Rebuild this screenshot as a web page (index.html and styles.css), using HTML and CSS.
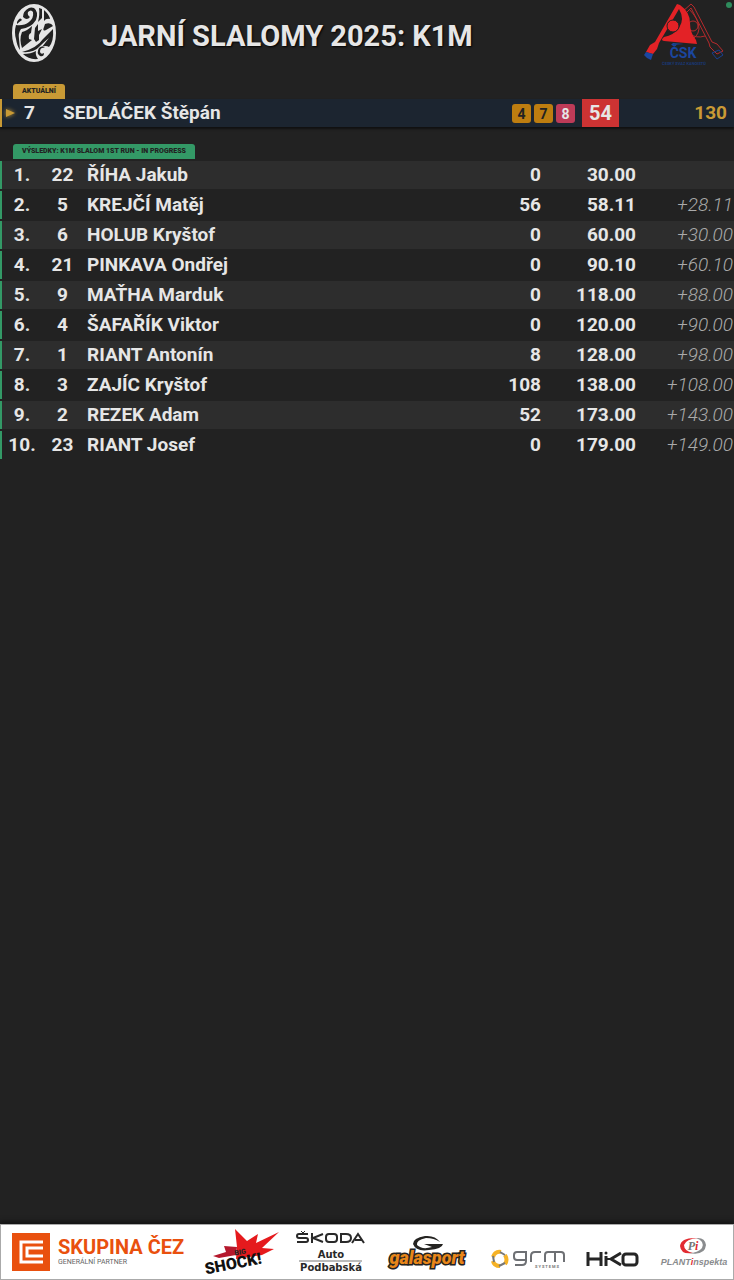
FILE: index.html
```html
<!DOCTYPE html>
<html lang="cs">
<head>
<meta charset="utf-8">
<meta name="viewport" content="width=device-width, initial-scale=1">
<title>Jarní slalomy 2025: K1M</title>
<link rel="stylesheet" href="styles.css">
</head>
<body>
<header class="header">
  <svg class="crest" viewBox="0 0 44 58" aria-label="Logo závodu" role="img">
    <ellipse cx="22" cy="29" rx="21" ry="28" fill="#e6e6e6"/>
    <g fill="#222">
      <path d="M17 4Q11 7 11 13Q15 17 18 13Q15 11 16 8Q19 5 21 8Q22 14 17 18Q12 22 4 21Q2 28 4 35Q5 42 8 46L7 35Q6 29 9 25Q19 24 24 16Q27 8 22 4Q19 3 17 4Z"/>
      <path d="M5 18Q8 12 10 16Q7 18 5 20Z"/>
      <path d="M27 4L30 5V14L26 18Q28 10 27 4Z"/>
      <path d="M32 6Q37 10 38 15Q34 14 32 17Z"/>
      <path d="M10 28Q15 27 20 22L19 29Q16 30 17 35L20 36L10 44Q7 35 10 28Z"/>
      <path d="M23 24L26 20L26 27L30 25L27 31V36L24 38L22 35Z"/>
      <path d="M33 20Q39 18 41 22L34 26Q30 28 32 23Z"/>
      <path d="M41 25Q42 37 37 43Q34 41 30 43Q33 39 37 34Q33 37 27 43Q22 49 10 48Q25 44 31 35Z"/>
      <path d="M11 50Q19 50 24 47Q23 51 26 55Q17 56 11 50Z"/>
      <path d="M33 44Q28 43 28 48Q29 51 32 49Q32 53 28 52Q24 49 27 44Q30 41 33 44Z"/>
    </g>
    <ellipse cx="22" cy="29" rx="21" ry="28" fill="none" stroke="#e6e6e6" stroke-width="2"/>
  </svg>
  <h1 class="title">JARNÍ SLALOMY 2025: K1M</h1>
  <svg class="federation" viewBox="0 0 80 64" aria-label="Český svaz kanoistů" role="img">
    <g fill="none" stroke="#b52a2c" stroke-width="1">
      <path d="M38 10L47 2L50 5L68 40L73 42L79 49L73 52L66 45L65 41L47 6L41 12"/>
      <path d="M45 7Q55 17 55 27Q54 36 43 40"/>
      <circle cx="49" cy="24" r="5"/>
      <path d="M44 31Q52 37 61 34"/>
    </g>
    <path d="M68 51L75 48L79 53L73 57Z" fill="none" stroke="#193f91"/>
    <path d="M33 2L36 3Q46 10 46 21Q46 31 52 38L53 42L20 39Q16 38 20 35Q30 33 35 26Q41 17 35 7L15 41L13 47L9 52L2 50L6 43L11 40Z" fill="#e32226"/>
    <circle cx="29" cy="24" r="6" fill="#e32226" stroke="#222" stroke-width="1"/>
    <path d="M2 50L9 52L7 58L3 56L0 53Z" fill="#1b469f"/>
    <path d="M29 41L40 42L27 43Z" fill="#1b469f"/>
    <text x="39" y="56" class="fed-name">ČSK</text>
    <text x="40" y="63" class="fed-sub">ČESKÝ SVAZ KANOISTŮ</text>
  </svg>
  <span class="status" title="Online"></span>
</header>

<main class="board">
  <section class="current">
    <h2 class="tab tab-current">AKTUÁLNÍ</h2>
    <div class="current-row">
      <span class="marker">
        <svg viewBox="0 0 9 8" class="arrow" aria-hidden="true"><path d="M0 0L9 4L0 8Z" fill="#c99a35"/></svg>
      </span>
      <span class="current-bib">7</span>
      <span class="current-name">SEDLÁČEK Štěpán</span>
      <span class="gates">
        <span class="gate">4</span>
        <span class="gate">7</span>
        <span class="gate gate-missed">8</span>
      </span>
      <span class="current-pen">54</span>
      <span class="current-time">130</span>
    </div>
  </section>

  <section class="results">
    <h2 class="tab tab-results">VÝSLEDKY: K1M SLALOM 1ST RUN - IN PROGRESS</h2>
    <table class="table">
      <tbody>
        <tr><td class="rank">1.</td><td class="bib">22</td><td class="name">ŘÍHA Jakub</td><td class="pen">0</td><td class="time">30.00</td><td class="diff"></td></tr>
        <tr><td class="rank">2.</td><td class="bib">5</td><td class="name">KREJČÍ Matěj</td><td class="pen">56</td><td class="time">58.11</td><td class="diff">+28.11</td></tr>
        <tr><td class="rank">3.</td><td class="bib">6</td><td class="name">HOLUB Kryštof</td><td class="pen">0</td><td class="time">60.00</td><td class="diff">+30.00</td></tr>
        <tr><td class="rank">4.</td><td class="bib">21</td><td class="name">PINKAVA Ondřej</td><td class="pen">0</td><td class="time">90.10</td><td class="diff">+60.10</td></tr>
        <tr><td class="rank">5.</td><td class="bib">9</td><td class="name">MAŤHA Marduk</td><td class="pen">0</td><td class="time">118.00</td><td class="diff">+88.00</td></tr>
        <tr><td class="rank">6.</td><td class="bib">4</td><td class="name">ŠAFAŘÍK Viktor</td><td class="pen">0</td><td class="time">120.00</td><td class="diff">+90.00</td></tr>
        <tr><td class="rank">7.</td><td class="bib">1</td><td class="name">RIANT Antonín</td><td class="pen">8</td><td class="time">128.00</td><td class="diff">+98.00</td></tr>
        <tr><td class="rank">8.</td><td class="bib">3</td><td class="name">ZAJÍC Kryštof</td><td class="pen">108</td><td class="time">138.00</td><td class="diff">+108.00</td></tr>
        <tr><td class="rank">9.</td><td class="bib">2</td><td class="name">REZEK Adam</td><td class="pen">52</td><td class="time">173.00</td><td class="diff">+143.00</td></tr>
        <tr><td class="rank">10.</td><td class="bib">23</td><td class="name">RIANT Josef</td><td class="pen">0</td><td class="time">179.00</td><td class="diff">+149.00</td></tr>
      </tbody>
    </table>
  </section>
</main>

<footer class="sponsors">
  <svg class="sponsor" width="174" height="38" viewBox="0 0 174 38" role="img" aria-label="Skupina ČEZ">
    <rect width="38" height="38" fill="#e9500e"/>
    <path d="M31 9H9V29H31M31 15H15V23H31" fill="none" stroke="#fff" stroke-width="3"/>
    <text x="46" y="21" class="cez">SKUPINA ČEZ</text>
    <text x="46" y="31" class="cez-sub">GENERÁLNÍ PARTNER</text>
  </svg>
  <svg class="sponsor" width="70" height="48" viewBox="0 0 70 48" role="img" aria-label="Big Shock!">
    <path d="M29 1L41 13L52 6L50 15L73 4L56 20L68 21L56 27L30 31L31 19Z" fill="#e51a1d"/>
    <path d="M7 28L20 24L18 18L31 19L30 27L13 30Z" fill="#b5182c"/>
    <g transform="rotate(-11 2 46)">
      <text x="32" y="33" class="shock-big">BIG</text>
      <text x="0" y="46" class="shock">SHOCK!</text>
    </g>
  </svg>
  <svg class="sponsor" width="70" height="44" viewBox="0 0 70 44" role="img" aria-label="Škoda Auto Podbabská">
    <g fill="none" stroke="#292929" stroke-width="2">
      <path d="M12 4H3Q1 4 1 6T3 8H10Q12 8 12 10T10 12H1"/>
      <path d="M5 1L7 3L9 1" stroke-width="1"/>
      <path d="M16 3V13M27 4L17 8L27 12"/>
      <rect x="30" y="4" width="11" height="8" rx="3"/>
      <path d="M45 4H50Q55 4 55 8T50 12H45Z"/>
      <path d="M56 13L62 4L68 13M59 10H66"/>
    </g>
    <text x="35" y="28" class="auto">Auto</text>
    <path d="M3 31H66" stroke="#bbb" stroke-width="2"/>
    <text x="35" y="41" class="auto">Podbabská</text>
  </svg>
  <svg class="sponsor" width="84" height="34" viewBox="0 0 84 34" role="img" aria-label="Galasport">
    <path d="M54 7Q49 0 39 1Q27 3 27 9Q30 17 43 15Q56 14 57 9H38L46 12Q36 15 31 10Q30 5 40 3Q48 3 54 7Z" fill="#242321"/>
    <text x="41" y="29" class="galasport">galasport</text>
  </svg>
  <svg class="sponsor sponsor-low" width="75" height="20" viewBox="0 0 75 20" role="img" aria-label="grm systems">
    <g fill="none" stroke-width="3">
      <path d="M2 8Q4 2 10 3M14 6Q17 11 14 15" stroke="#f6b225" stroke-width="4"/>
      <path d="M2 12Q3 17 9 17" stroke="#f6b225" stroke-width="4"/>
      <path d="M9 3L14 6M2 7L3 13M8 17L14 14" stroke="#777" stroke-width="2"/>
    </g>
    <g fill="none" stroke="#6e7074" stroke-width="2">
      <path d="M35 11H26Q23 11 23 8V6Q23 3 26 3H35V12Q35 16 31 16H24"/>
      <path d="M40 13V7Q40 3 44 3H50M54 13V6Q54 3 57 3H70Q73 3 73 6V13M64 3V13"/>
    </g>
    <text x="56" y="19" class="grm-sub">S Y S T E M S</text>
  </svg>
  <svg class="sponsor sponsor-low" width="53" height="16" viewBox="0 0 53 16" role="img" aria-label="Hiko">
    <g fill="none" stroke="#252525" stroke-width="3">
      <path d="M2 1V15M15 1V15M2 8H15M20 5V15M35 2L25 8L35 14"/>
      <rect x="37" y="3" width="14" height="11" rx="3"/>
    </g>
    <circle cx="20" cy="2" r="1.5" fill="#252525"/>
    <path d="M20 8H27" stroke="#252525" stroke-width="2"/>
  </svg>
  <svg class="sponsor" width="70" height="30" viewBox="0 0 70 30" role="img" aria-label="Plantinspekta">
    <path d="M39 1Q22 0 21 9Q22 18 34 16Q25 14 25 8Q27 2 39 1Z" fill="#e22b31"/>
    <path d="M37 1Q46 4 43 11Q39 16 30 16Q46 19 47 8Q46 0 37 1Z" fill="#8a8c8e"/>
    <text x="34" y="13" class="plant-mark">P<tspan fill="#e22b31">i</tspan></text>
    <text x="35" y="28" class="plant">PLANT<tspan fill="#e22b31">i</tspan>nspekta</text>
  </svg>
</footer>
</body>
</html>
```

FILE: styles.css
```css
* {
  box-sizing: border-box;
}

body {
  display: flex;
  flex-direction: column;
  min-height: 100vh;
  margin: 0;
  background: #222;
  color: #e6e6e6;
  font-family: Roboto, "Liberation Sans", sans-serif;
}

.header {
  position: relative;
  display: flex;
  align-items: flex-start;
  height: 84px;
  padding: 2px 10px 0 12px;
}

.crest {
  width: 44px;
  height: 58px;
  margin-top: 2px;
}

.title {
  flex: 1;
  margin: 16px 0 0 46px;
  font-size: 29px;
  line-height: 36px;
  font-weight: 700;
  text-shadow: 1px 1px 2px #000;
}

.federation {
  width: 80px;
  height: 64px;
}

.fed-name {
  font: 700 14px Roboto, sans-serif;
  text-anchor: middle;
  fill: #1b469f;
}

.fed-sub {
  font: 700 4px Roboto, sans-serif;
  text-anchor: middle;
  fill: #193977;
}

.status {
  position: absolute;
  top: 2px;
  right: 2px;
  width: 6px;
  height: 6px;
  border-radius: 50%;
  background: #2e8b5c;
}

.board {
  flex: 1;
}

.tab {
  width: fit-content;
  height: 15px;
  margin: 0 0 0 13px;
  padding: 0 9px;
  border-radius: 3px 3px 0 0;
  color: #222;
  font-size: 7px;
  line-height: 15px;
  font-weight: 900;
}

.tab-current {
  background: #c99a35;
}

.tab-results {
  margin-bottom: 2px;
  background: #339966;
}

.current-row {
  display: flex;
  align-items: center;
  height: 28px;
  padding-right: 7px;
  border-left: 2px solid #c99a35;
  background: #1c2530;
  box-shadow: 0 2px 2px #111;
  font-size: 19px;
  line-height: 28px;
  font-weight: 700;
}

.marker {
  display: flex;
  width: 18px;
  padding-left: 4px;
}

.arrow {
  width: 9px;
  height: 8px;
  filter: drop-shadow(0 0 2px #c99a35);
}

.current-bib {
  width: 19px;
  text-align: center;
}

.current-name {
  flex: 1;
  padding-left: 24px;
}

.gates {
  display: flex;
  gap: 3px;
}

.gate {
  width: 19px;
  height: 19px;
  border-radius: 3px;
  background: #bd7d10;
  color: #222;
  font-size: 14px;
  line-height: 20px;
  text-align: center;
}

.gate-missed {
  background: #bd3b58;
  color: #e6e6e6;
}

.current-pen {
  width: 37px;
  margin-left: 7px;
  background: #cc3333;
  font-size: 20px;
  text-align: center;
}

.current-time {
  width: 108px;
  color: #c99a35;
  text-align: right;
}

.results {
  margin-top: 17px;
}

.table {
  width: 100%;
  border-collapse: separate;
  border-spacing: 0;
  table-layout: fixed;
  font-size: 19px;
  line-height: 28px;
  font-weight: 700;
}

.table td {
  height: 30px;
  padding: 0;
  border-bottom: 2px solid #222;
  white-space: nowrap;
}

.table tr:nth-child(odd) {
  background: #2d2d2d;
}

.table .rank {
  width: 44px;
  box-shadow: inset 2px 0 #339966;
  text-align: center;
}

.table .bib {
  width: 37px;
  text-align: center;
}

.table .name {
  padding-left: 6px;
}

.table .pen {
  width: 60px;
  text-align: right;
}

.table .time {
  width: 95px;
  text-align: right;
}

.table .diff {
  width: 98px;
  padding-right: 1px;
  color: #aaa;
  font-weight: 300;
  font-style: italic;
  text-align: right;
}

.sponsors {
  display: flex;
  align-items: center;
  justify-content: space-between;
  height: 56px;
  padding: 0 4px 0 11px;
  border: 1px solid #aaa;
  background: #fff;
  box-shadow: 0 -2px 5px #111;
}

.sponsor {
  flex: none;
  overflow: visible;
}

.sponsor-low {
  margin-top: 14px;
}

.cez {
  font: 700 20px Roboto, sans-serif;
  fill: #e9500e;
}

.cez-sub {
  font: 400 7px Roboto, sans-serif;
  fill: #666;
}

.shock-big {
  font: 900 7px Roboto, sans-serif;
  fill: #222;
}

.shock {
  font: 900 16px Roboto, sans-serif;
  fill: #111;
}

.auto {
  font: 700 10px "DejaVu Sans", sans-serif;
  text-anchor: middle;
  fill: #292929;
}

.galasport {
  font: italic 900 18px Roboto, sans-serif;
  text-anchor: middle;
  fill: #e88619;
  stroke: #242321;
  stroke-width: 3px;
  paint-order: stroke;
}

.grm-sub {
  font: 700 4px Roboto, sans-serif;
  text-anchor: middle;
  fill: #777;
}

.plant-mark {
  font: italic 700 12px "Liberation Serif", serif;
  text-anchor: middle;
  fill: #777;
}

.plant {
  font: italic 700 9px "Liberation Sans", sans-serif;
  text-anchor: middle;
  fill: #8a8c8e;
}
```
